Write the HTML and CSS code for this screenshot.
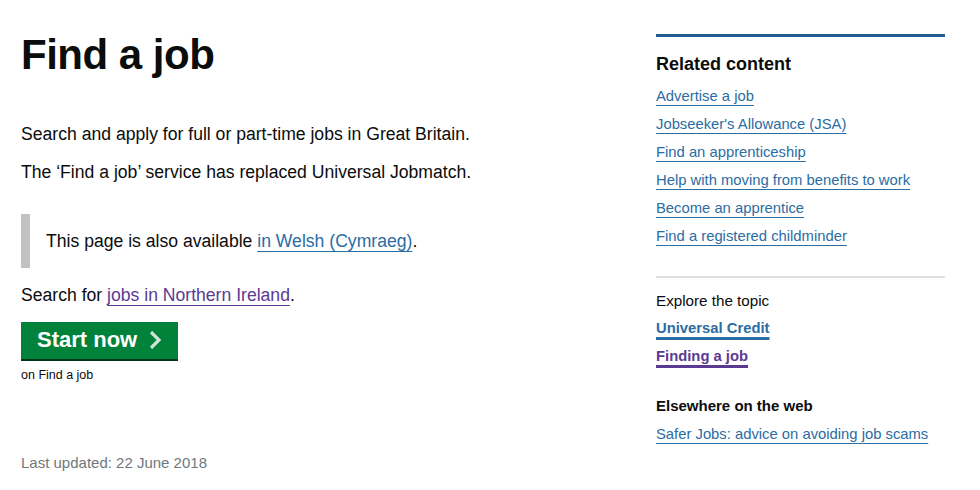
FILE: index.html
```html
<!DOCTYPE html>
<html lang="en">
<head>
    <meta charset="UTF-8">
    <title>Find a job - GOV.UK</title>
    <link rel="stylesheet" href="styles.css">
</head>
<body>
    <div class="page">
        <!-- Main content -->
        <main class="main">
            <h1 class="title">Find a job</h1>

            <p class="body-text">Search and apply for full or part-time jobs in Great Britain.</p>
            <p class="body-text">The ‘Find a job’ service has replaced Universal Jobmatch.</p>

            <div class="inset">
                This page is also available <a href="#" class="link">in Welsh (Cymraeg)</a>.
            </div>

            <p class="body-text search-line">Search for <a href="#" class="link visited">jobs in Northern Ireland</a>.</p>

            <a href="#" class="start-button">
                Start now
                <svg class="chevron" width="14" height="18" viewBox="0 0 14 18">
                    <path d="M2 1 L10 9 L2 17" fill="none" stroke="#cfe3d6" stroke-width="3.2"/>
                </svg>
            </a>
            <p class="button-caption">on Find a job</p>

            <p class="updated">Last updated: 22 June 2018</p>
        </main>

        <!-- Sidebar -->
        <aside class="sidebar">
            <div class="related">
                <h2 class="side-heading">Related content</h2>
                <ul class="side-links">
                    <li><a href="#" class="link">Advertise a job</a></li>
                    <li><a href="#" class="link">Jobseeker's Allowance (JSA)</a></li>
                    <li><a href="#" class="link">Find an apprenticeship</a></li>
                    <li><a href="#" class="link">Help with moving from benefits to work</a></li>
                    <li><a href="#" class="link">Become an apprentice</a></li>
                    <li><a href="#" class="link">Find a registered childminder</a></li>
                </ul>
            </div>

            <div class="topics">
                <p class="side-label">Explore the topic</p>
                <ul class="side-links">
                    <li><a href="#" class="link bold">Universal Credit</a></li>
                    <li><a href="#" class="link bold visited">Finding a job</a></li>
                </ul>
            </div>

            <div class="elsewhere">
                <h2 class="side-heading small">Elsewhere on the web</h2>
                <ul class="side-links">
                    <li><a href="#" class="link">Safer Jobs: advice on avoiding job scams</a></li>
                </ul>
            </div>
        </aside>
    </div>
</body>
</html>
```

FILE: styles.css
```css
/* General page */
body {
    margin: 0;
    font-family: "Liberation Sans", Arial, sans-serif;
    color: #0b0c0c;
    background: #fff;
}

.page {
    display: flex;
    justify-content: space-between;
    padding: 0 35px 0 21px;
}

/* Links */
.link {
    color: #2b6ca3;
    text-decoration: underline;
    text-decoration-thickness: 1px;
    text-underline-offset: 4px;
}

.link.visited {
    color: #5b3a93;
}

.link.bold {
    font-weight: bold;
    text-decoration-thickness: 3px;
}

/* Main column */
.main {
    width: 560px;
}

.title {
    font-size: 42px;
    font-weight: bold;
    letter-spacing: -0.5px;
    margin: 31px 0 44px;
    line-height: 48px;
}

.body-text {
    font-size: 17.6px;
    line-height: 22px;
    margin: 0 0 16px;
}

.inset {
    font-size: 17.6px;
    line-height: 22px;
    border-left: 9px solid #bfc1c3;
    padding: 16px 0 16px 16px;
    margin: 31px 0 16px;
}

.search-line {
    margin-bottom: 16px;
}

/* Start button */
.start-button {
    display: inline-flex;
    align-items: center;
    gap: 12px;
    background: #00823b;
    color: #fff;
    font-size: 22px;
    font-weight: bold;
    text-decoration: none;
    padding: 5px 15px 6px 16px;
    box-shadow: 0 2px 0 #003618;
}

.button-caption {
    font-size: 12.5px;
    margin: 9px 0 0;
}

.updated {
    font-size: 15px;
    color: #6f777b;
    margin: 72px 0 0;
}

/* Sidebar */
.sidebar {
    width: 289px;
    padding-top: 34px;
}

.related {
    border-top: 3px solid #1f5f94;
    padding-top: 16px;
    padding-bottom: 21px;
}

.side-heading {
    font-size: 18px;
    font-weight: bold;
    margin: 0 0 12px;
    line-height: 22px;
}

.side-heading.small {
    font-size: 15px;
    margin-bottom: 8px;
}

.side-links {
    list-style: none;
    margin: 0;
    padding: 0;
}

.side-links li {
    font-size: 14.8px;
    line-height: 18px;
    margin-bottom: 10px;
}

.topics {
    border-top: 2px solid #dee0e2;
    padding-top: 14px;
    padding-bottom: 20px;
}

.side-label {
    font-size: 15.2px;
    margin: 0 0 10px;
}
```
